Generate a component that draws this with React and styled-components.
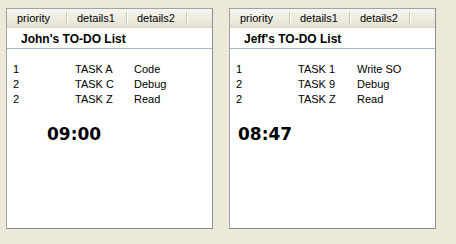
import React from "react";
import styled, { createGlobalStyle } from "styled-components";

const Global = createGlobalStyle`
  html, body { margin: 0; padding: 0; }
  body {
    background: #ece9d8;
    font-family: "Liberation Sans", Arial, sans-serif;
    width: 456px;
    height: 244px;
    overflow: hidden;
  }
`;

const Page = styled.div`
  display: flex;
  gap: 16px;
  padding: 8px 0 0 6px;
`;

const Panel = styled.div`
  width: 205px;
  height: 219px;
  background: #fff;
  border: 1px solid #9ea3a8;
  border-right-color: #8a8f94;
  border-bottom-color: #858a8f;
  display: flex;
  flex-direction: column;
`;

const Header = styled.div`
  display: flex;
  height: 18px;
  background: linear-gradient(#f7f6f0, #ebe9dd 70%, #e2dfd0);
  border-bottom: 1px solid #d8d5c6;
`;

const HeaderCell = styled.div`
  position: relative;
  width: 60px;
  box-sizing: border-box;
  padding-left: 10px;
  font-size: 11px;
  line-height: 18px;
  color: #000;
  &::after {
    content: "";
    position: absolute;
    right: 0;
    top: 3px;
    height: 12px;
    width: 1px;
    background: #c9c6b4;
    box-shadow: 1px 0 0 #fff;
  }
`;

const Title = styled.div`
  height: 18px;
  padding: 2px 0 0 14px;
  font-size: 12px;
  font-weight: bold;
  line-height: 18px;
  color: #000;
  background: #fff;
  border-bottom: 1px solid #a3b9cf;
`;

const List = styled.div`
  padding-top: 13px;
`;

const Row = styled.div`
  display: grid;
  grid-template-columns: 62px 59px 1fr;
  padding-left: 6px;
  font-size: 11px;
  line-height: 15px;
  color: #000;
`;

const Clock = styled.div`
  margin-top: 17px;
  padding-left: ${(p) => p.$indent}px;
  font-family: "DejaVu Sans", Verdana, sans-serif;
  font-weight: bold;
  font-size: 17px;
  line-height: 20px;
  color: #000;
`;

const lists = [
  {
    title: "John's TO-DO List",
    time: "09:00",
    indent: 40,
    rows: [
      ["1", "TASK A", "Code"],
      ["2", "TASK C", "Debug"],
      ["2", "TASK Z", "Read"],
    ],
  },
  {
    title: "Jeff's TO-DO List",
    time: "08:47",
    indent: 8,
    rows: [
      ["1", "TASK 1", "Write SO"],
      ["2", "TASK 9", "Debug"],
      ["2", "TASK Z", "Read"],
    ],
  },
];

export default function App() {
  return (
    <>
      <Global />
      <Page>
        {lists.map((l) => (
          <Panel key={l.title}>
            <Header>
              <HeaderCell>priority</HeaderCell>
              <HeaderCell>details1</HeaderCell>
              <HeaderCell>details2</HeaderCell>
            </Header>
            <Title>{l.title}</Title>
            <List>
              {l.rows.map((r, i) => (
                <Row key={i}>
                  <span>{r[0]}</span>
                  <span>{r[1]}</span>
                  <span>{r[2]}</span>
                </Row>
              ))}
            </List>
            <Clock $indent={l.indent}>{l.time}</Clock>
          </Panel>
        ))}
      </Page>
    </>
  );
}
